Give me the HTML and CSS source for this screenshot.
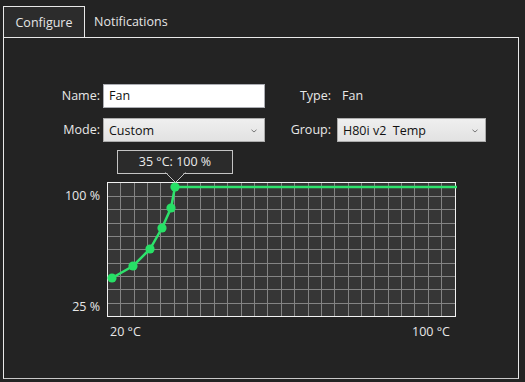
FILE: index.html
```html
<!DOCTYPE html>
<html lang="en">
<head>
  <meta charset="UTF-8" />
  <title>Fan - Configure</title>
  <link rel="stylesheet" href="styles.css">
</head>
<body>

<div class="tabs">
  <div class="tab active">Configure</div>
  <div class="tab">Notifications</div>
</div>

<div class="panel">
  <div class="form">
    <label>Name:</label>
    <div class="input">Fan</div>
    <label>Type:</label>
    <div class="value">Fan</div>

    <label>Mode:</label>
    <div class="select">
      <span>Custom</span>
      <svg class="chevron" width="6" height="4" viewBox="0 0 6 4"><path d="M0.5 0.8 L3 3 L5.5 0.8" fill="none" stroke="#777" stroke-width="1"/></svg>
    </div>
    <label>Group:</label>
    <div class="select">
      <span>H80i v2&nbsp; Temp</span>
      <svg class="chevron" width="6" height="4" viewBox="0 0 6 4"><path d="M0.5 0.8 L3 3 L5.5 0.8" fill="none" stroke="#777" stroke-width="1"/></svg>
    </div>
  </div>

  <div class="chart">
    <div class="y-axis">
      <span>100 %</span>
      <span>25 %</span>
    </div>
    <div class="plot">
      <div class="tooltip">
        35 °C: 100 %
        <svg class="pointer" width="21" height="11" viewBox="0 0 21 11">
          <polygon points="1,0 20,0 10.5,9.5" fill="#2b2b2b"/>
          <path d="M0.5 0.5 L10.5 10.5 L20.5 0.5" fill="none" stroke="#c4c4c4" stroke-width="1"/>
        </svg>
      </div>
      <svg class="grid" width="349" height="135" viewBox="0 0 349 135">
        <rect x="0" y="0" width="349" height="135" fill="#363636"/>
        <path d="M13.5 0V135M27.5 0V135M40.5 0V135M53.5 0V135M67.5 0V135M80.5 0V135M93.5 0V135M107.5 0V135M120.5 0V135M134.5 0V135M147.5 0V135M160.5 0V135M174.5 0V135M187.5 0V135M201.5 0V135M214.5 0V135M227.5 0V135M241.5 0V135M254.5 0V135M267.5 0V135M281.5 0V135M294.5 0V135M307.5 0V135M321.5 0V135M334.5 0V135
                 M0 14.5H349M0 27.5H349M0 41.5H349M0 54.5H349M0 67.5H349M0 81.5H349M0 94.5H349M0 107.5H349M0 121.5H349"
              stroke="#848484" stroke-width="1"/>
        <rect x="0.5" y="0.5" width="348" height="134" fill="none" stroke="#f2f2f2" stroke-width="1"/>
        <polyline points="5,96 26,84 43,67 55,46 64,26 68,5 350,5" fill="none" stroke="#2ee26c" stroke-width="2.5"/>
        <g fill="#27e066">
          <circle cx="5" cy="96" r="4.6"/>
          <circle cx="26" cy="84" r="4.6"/>
          <circle cx="43" cy="67" r="4.6"/>
          <circle cx="55" cy="46" r="4.6"/>
          <circle cx="64" cy="26" r="4.6"/>
          <circle cx="68" cy="5" r="4.6"/>
        </g>
      </svg>
    </div>
  </div>

  <div class="x-axis">
    <span>20 °C</span>
    <span>100 °C</span>
  </div>
</div>

</body>
</html>
```

FILE: styles.css
```css
body {
  margin: 0;
  width: 525px;
  height: 382px;
  overflow: hidden;
  font-family: "Open Sans", "Noto Sans", sans-serif;
  font-size: 12.5px;
  color: #e8e8e8;
  background: #232323;
}

.tabs {
  display: flex;
  padding: 6px 0 0 3px;
}

.tab {
  height: 31px;
  line-height: 31px;
  padding: 0 9px;
  color: #e6e6e6;
}

.tab.active {
  position: relative;
  z-index: 1;
  width: 82px;
  box-sizing: border-box;
  padding: 0;
  text-align: center;
  background: #2c2c2c;
  border: 1px solid #e8e8e8;
  border-bottom: none;
  margin-bottom: -1px;
}

.panel {
  margin-left: 3px;
  width: 516px;
  height: 342px;
  box-sizing: border-box;
  border: 1px solid #e8e8e8;
  border-bottom-color: #c8c8c8;
}

.form {
  display: grid;
  grid-template-columns: 99px 162px 72px 149px;
  grid-auto-rows: 24px;
  row-gap: 10px;
  margin-top: 46px;
}

.form label {
  text-align: right;
  line-height: 24px;
  padding-right: 3px;
}

.form label:nth-of-type(even) {
  padding-right: 6px;
}

.input {
  background: #fff;
  border: 1px solid #abadb3;
  color: #111;
  line-height: 22px;
  padding-left: 5px;
}

.value {
  line-height: 24px;
  padding-left: 5px;
}

.select {
  display: flex;
  justify-content: space-between;
  align-items: center;
  background: linear-gradient(#efefef, #e2e2e2);
  border: 1px solid #acacac;
  color: #111;
  padding: 0 7px 0 5px;
}

.chevron {
  margin-top: 1px;
}

.chart {
  display: flex;
  margin-top: 40px;
}

.y-axis {
  width: 96px;
  height: 135px;
  box-sizing: border-box;
  padding: 6px 0 2px;
  display: flex;
  flex-direction: column;
  justify-content: space-between;
  align-items: flex-end;
  line-height: 16px;
}

.plot {
  position: relative;
  margin-left: 7px;
  width: 349px;
  height: 135px;
}

.grid {
  display: block;
  overflow: visible;
}

.tooltip {
  position: absolute;
  left: 10px;
  top: -32px;
  width: 116px;
  height: 24px;
  box-sizing: border-box;
  border: 1px solid #c4c4c4;
  background: #2b2b2b;
  text-align: center;
  line-height: 22px;
  color: #ececec;
}

.pointer {
  position: absolute;
  left: 47px;
  top: 21px;
}

.x-axis {
  display: flex;
  justify-content: space-between;
  margin: 7px 0 0 103px;
  width: 349px;
  box-sizing: border-box;
  padding: 0 6px 0 3px;
  line-height: 16px;
}
```
